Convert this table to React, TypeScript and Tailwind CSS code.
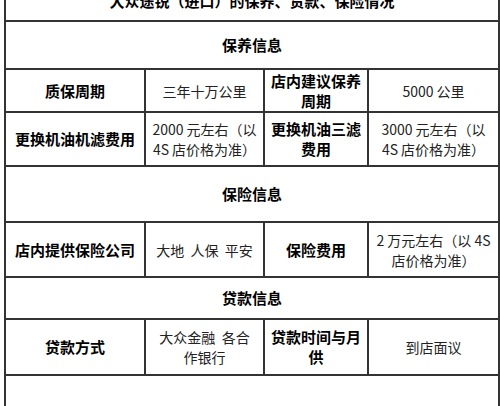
import React from "react";

const bd = "border-2 border-[#333]";

function H({ children, h }: { children: React.ReactNode; h: string }) {
  return (
    <tr className={h}>
      <td colSpan={4} className={`${bd} text-center font-bold text-[15px] text-black`}>
        {children}
      </td>
    </tr>
  );
}

function B({ children }: { children: React.ReactNode }) {
  return (
    <td className={`${bd} text-center font-bold text-[15px] leading-[20px] text-black px-1`}>
      {children}
    </td>
  );
}

function N({ children }: { children: React.ReactNode }) {
  return (
    <td className={`${bd} text-center text-[14px] leading-[20px] text-[#222] px-1`}>
      {children}
    </td>
  );
}

export default function App() {
  return (
    <div
      className="w-[500px] h-[406px] overflow-hidden bg-white"
      style={{ fontFamily: '"Noto Sans CJK SC", "Noto Sans", sans-serif' }}
    >
      <table className="table-fixed border-collapse w-[494px] ml-[4px] -mt-[20px]">
        <colgroup>
          <col className="w-[140px]" />
          <col className="w-[119px]" />
          <col className="w-[104px]" />
          <col className="w-[131px]" />
        </colgroup>
        <tbody>
          <H h="h-[40px]">大众途锐（进口）的保养、贷款、保险情况</H>
          <H h="h-[48px]">保养信息</H>
          <tr className="h-[43px]">
            <B>质保周期</B>
            <N>三年十万公里</N>
            <B>
              店内建议保养
              <br />
              周期
            </B>
            <N>5000 公里</N>
          </tr>
          <tr className="h-[54px]">
            <B>更换机油机滤费用</B>
            <N>
              2000 元左右（以
              <br />
              4S 店价格为准）
            </N>
            <B>
              更换机油三滤
              <br />
              费用
            </B>
            <N>
              3000 元左右（以
              <br />
              4S 店价格为准）
            </N>
          </tr>
          <H h="h-[56px]">保险信息</H>
          <tr className="h-[55px]">
            <B>店内提供保险公司</B>
            <N>大地&nbsp; 人保&nbsp; 平安</N>
            <B>保险费用</B>
            <N>
              2 万元左右（以 4S
              <br />
              店价格为准）
            </N>
          </tr>
          <H h="h-[42px]">贷款信息</H>
          <tr className="h-[56px]">
            <B>贷款方式</B>
            <N>
              大众金融&nbsp; 各合
              <br />
              作银行
            </N>
            <B>
              贷款时间与月
              <br />
              供
            </B>
            <N>到店面议</N>
          </tr>
          <tr className="h-[60px]">
            <td colSpan={4} className={bd}></td>
          </tr>
        </tbody>
      </table>
    </div>
  );
}
